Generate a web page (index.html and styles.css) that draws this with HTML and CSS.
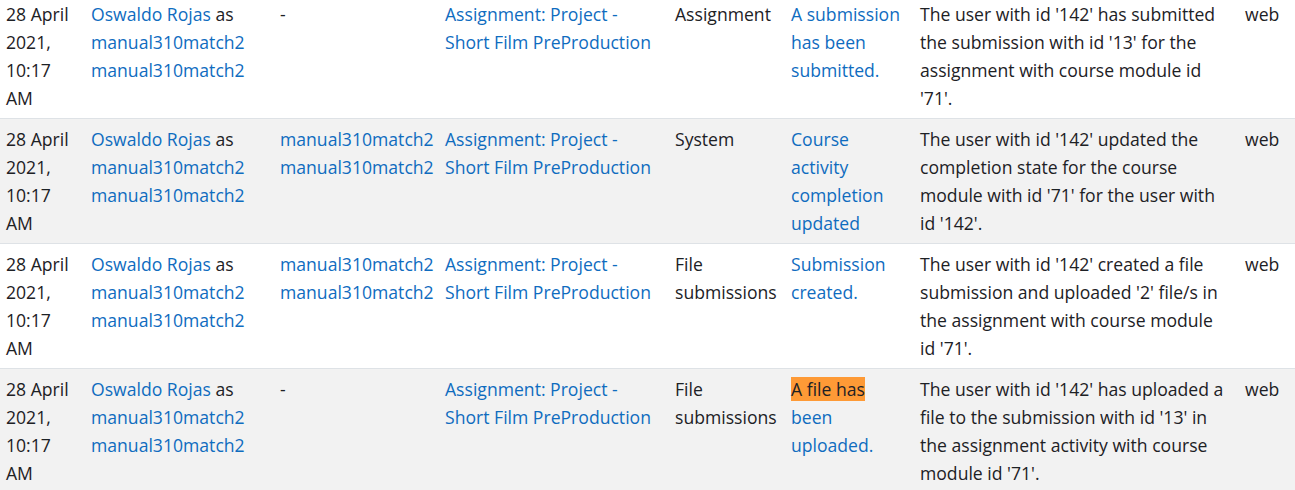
FILE: index.html
```html
<!DOCTYPE html>
<html lang="en">
<head>
<meta charset="utf-8">
<title>Logs</title>
<link rel="stylesheet" href="styles.css">
</head>
<body>
<table class="log-table">
  <colgroup>
    <col class="c-time"><col class="c-user"><col class="c-affected"><col class="c-context"><col class="c-component"><col class="c-event"><col class="c-desc"><col class="c-origin">
  </colgroup>
  <tbody>
    <tr>
      <td>28 April 2021, 10:17 AM</td>
      <td><a href="#">Oswaldo Rojas</a> as <a href="#">manual310match2 manual310match2</a></td>
      <td>-</td>
      <td><a href="#">Assignment: Project - Short Film PreProduction</a></td>
      <td>Assignment</td>
      <td><a href="#">A submission has been submitted.</a></td>
      <td class="desc">The user with id '142' has submitted the submission with id '13' for the assignment with course module id '71'.</td>
      <td>web</td>
    </tr>
    <tr class="striped">
      <td>28 April 2021, 10:17 AM</td>
      <td><a href="#">Oswaldo Rojas</a> as <a href="#">manual310match2 manual310match2</a></td>
      <td><a href="#">manual310match2 manual310match2</a></td>
      <td><a href="#">Assignment: Project - Short Film PreProduction</a></td>
      <td>System</td>
      <td><a href="#">Course activity completion updated</a></td>
      <td class="desc">The user with id '142' updated the completion state for the course module with id '71' for the user with id '142'.</td>
      <td>web</td>
    </tr>
    <tr>
      <td>28 April 2021, 10:17 AM</td>
      <td><a href="#">Oswaldo Rojas</a> as <a href="#">manual310match2 manual310match2</a></td>
      <td><a href="#">manual310match2 manual310match2</a></td>
      <td><a href="#">Assignment: Project - Short Film PreProduction</a></td>
      <td>File submissions</td>
      <td><a href="#">Submission created.</a></td>
      <td class="desc">The user with id '142' created a file submission and uploaded '2' file/s in the assignment with course module id '71'.</td>
      <td>web</td>
    </tr>
    <tr class="striped">
      <td>28 April 2021, 10:17 AM</td>
      <td><a href="#">Oswaldo Rojas</a> as <a href="#">manual310match2 manual310match2</a></td>
      <td>-</td>
      <td><a href="#">Assignment: Project - Short Film PreProduction</a></td>
      <td>File submissions</td>
      <td><a href="#"><span class="highlight">A file has</span> been uploaded.</a></td>
      <td class="desc">The user with id '142' has uploaded a file to the submission with id '13' in the assignment activity with course module id '71'.</td>
      <td>web</td>
    </tr>
  </tbody>
</table>
</body>
</html>
```
FILE: styles.css
```css
html, body {
  margin: 0;
  padding: 0;
  background: #ffffff;
}
body {
  font-family: "Open Sans", "Noto Sans", "Liberation Sans", sans-serif;
  font-size: 17.6px;
  line-height: 28px;
  color: #1d2125;
  overflow: hidden;
}
.log-table {
  width: 1295px;
  table-layout: fixed;
  border-collapse: collapse;
  margin-top: -7px;
}
.c-time { width: 85px; }
.c-user { width: 189px; }
.c-affected { width: 165px; }
.c-context { width: 230px; }
.c-component { width: 116px; }
.c-event { width: 129px; }
.c-desc { width: 325px; }
.c-origin { width: 56px; }
.log-table td {
  border-top: 1px solid #dee2e6;
  padding: 6px 6px;
  vertical-align: top;
}
.log-table td.desc {
  padding-right: 10px;
}
.striped td {
  background: #f2f2f2;
}
a {
  color: #0f6cbf;
  text-decoration: none;
}
.highlight {
  background: #fe9a36;
  color: #1d2125;
}
```
